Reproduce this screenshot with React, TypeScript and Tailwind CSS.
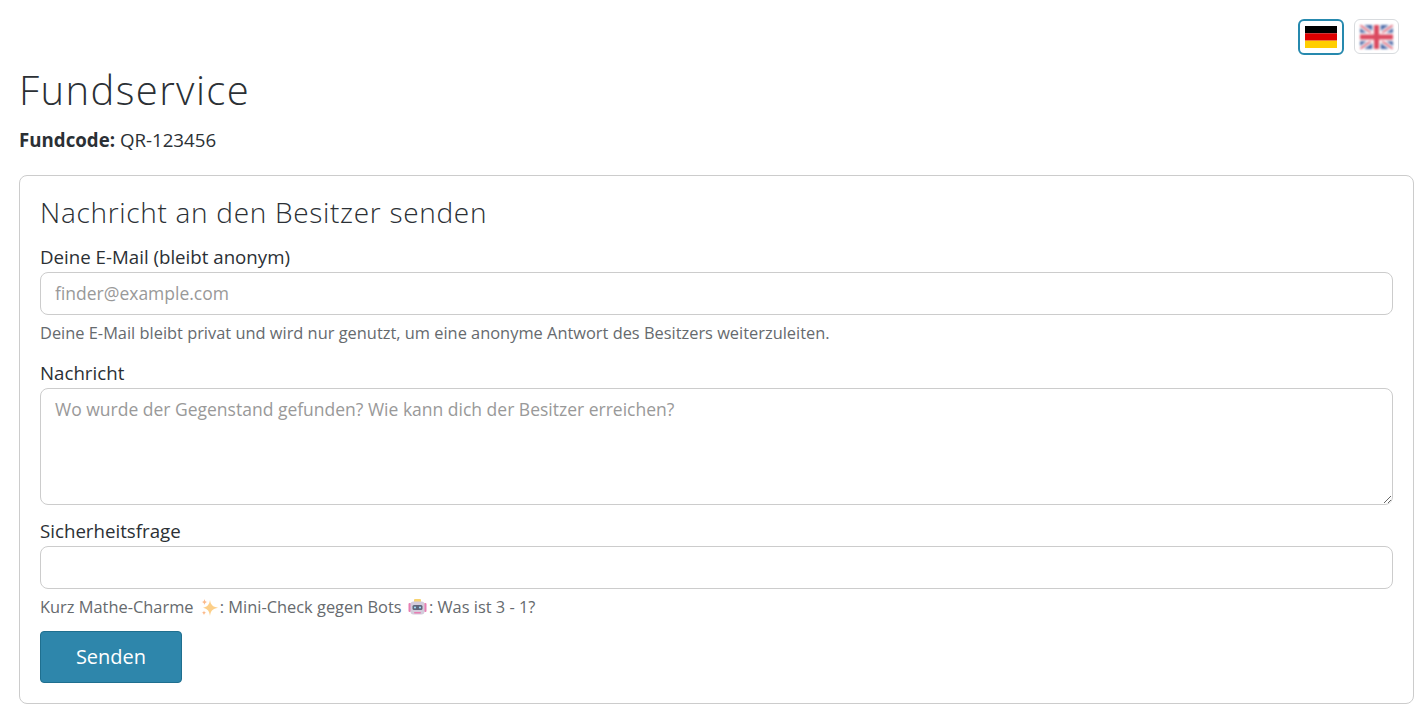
import React from "react";

const body = "font-['Open_Sans',sans-serif]";

function FlagDE() {
  return (
    <svg width="32" height="22" viewBox="0 0 32 22" className="block">
      <rect width="32" height="7.33" y="0" fill="#000000" />
      <rect width="32" height="7.33" y="7.33" fill="#dd0000" />
      <rect width="32" height="7.34" y="14.66" fill="#ffce00" />
    </svg>
  );
}

function FlagUK() {
  return (
    <svg width="33" height="24" viewBox="0 0 33 24" className="block opacity-85 blur-[0.9px]">
      <rect width="33" height="24" fill="#2f5199" />
      <path d="M0 0L33 24M33 0L0 24" stroke="#ffffff" strokeWidth="5" />
      <path d="M0 0L33 24M33 0L0 24" stroke="#d8455b" strokeWidth="1.8" />
      <path d="M16.5 0V24M0 12H33" stroke="#ffffff" strokeWidth="8.5" />
      <path d="M16.5 0V24M0 12H33" stroke="#d52b45" strokeWidth="5" />
    </svg>
  );
}

function Sparkles() {
  return (
    <svg width="19" height="19" viewBox="0 0 19 19" className="ml-[2px] mr-[1px] inline-block align-[-4px] opacity-60">
      <path d="M10 2C10.8 7 12.5 8.7 18 9.8C12.5 10.9 10.8 12.6 10 18C9.2 12.6 7.5 10.9 3 9.8C7.5 8.7 9.2 7 10 2Z" fill="#fbb03b" />
      <path d="M4.5 1C4.9 3 5.5 3.7 7.5 4C5.5 4.4 4.9 5 4.5 7C4.1 5 3.5 4.4 1.5 4C3.5 3.7 4.1 3 4.5 1Z" fill="#f98a3c" />
      <path d="M4 12.5C4.3 14 4.8 14.5 6.3 14.8C4.8 15.1 4.3 15.6 4 17.2C3.7 15.6 3.2 15.1 1.7 14.8C3.2 14.5 3.7 14 4 12.5Z" fill="#f98a3c" />
    </svg>
  );
}

function Robot() {
  return (
    <svg width="19" height="19" viewBox="0 0 19 19" className="ml-[2px] mr-[2px] inline-block align-[-4px] opacity-75">
      <rect x="6" y="1" width="7" height="3.5" rx="1" fill="#f5c542" />
      <rect x="0.5" y="5" width="2.5" height="9" rx="1" fill="#e0559a" />
      <rect x="16" y="5" width="2.5" height="9" rx="1" fill="#e0559a" />
      <rect x="2.5" y="3.5" width="14" height="13" rx="3" fill="#c5bccf" />
      <rect x="4.5" y="7" width="10" height="5" rx="1.5" fill="#2a3350" />
      <circle cx="7" cy="9.5" r="1.1" fill="#7fd4f5" />
      <circle cx="12" cy="9.5" r="1.1" fill="#7fd4f5" />
      <rect x="6" y="14" width="7" height="1.4" rx="0.7" fill="#e0559a" />
    </svg>
  );
}

export default function App() {
  return (
    <div className={`${body} min-h-[714px] overflow-hidden bg-white pl-[19px] pr-[8px] text-[#2b3035]`}>
      <div className="flex justify-end gap-[10px] pr-[15px] pt-[19px]">
        <button className="flex h-[36px] w-[46px] items-center justify-center rounded-[6px] border-2 border-[#2689ae] bg-white">
          <FlagDE />
        </button>
        <button className="flex h-[35px] w-[45px] items-center justify-center rounded-[6px] border border-[#d8dbde] bg-white">
          <FlagUK />
        </button>
      </div>

      <h1 className="mt-[7px] h-[56px] text-[40px] leading-[56px] font-light tracking-[1.4px] text-[#2b3035]">Fundservice</h1>
      <p className="mt-[10px] h-[24px] text-[18.7px] leading-[24px]">
        <strong className="font-bold">Fundcode:</strong> QR-123456
      </p>

      <form className="mt-[23px] h-[529px] rounded-[8px] border border-[#cccccc] px-[20px] pt-[16px]">
        <h2 className="h-[40px] text-[28px] leading-[40px] font-[350] tracking-[0.7px] text-[#2b3035]">
          Nachricht an den Besitzer senden
        </h2>

        <label className="mt-[13px] block h-[24px] text-[18.7px] leading-[24px]">Deine E-Mail (bleibt anonym)</label>
        <input
          type="email"
          placeholder="finder@example.com"
          className="mt-[3px] block h-[43px] w-full rounded-[8px] border border-[#cccccc] bg-white px-[14px] pb-[1px] text-[17.5px] outline-none placeholder:text-[#999999]"
        />
        <p className="mt-[6px] h-[24px] text-[16.4px] leading-[24px] text-[#666a6e]">
          Deine E-Mail bleibt privat und wird nur genutzt, um eine anonyme Antwort des Besitzers weiterzuleiten.
        </p>

        <label className="mt-[16px] block h-[24px] text-[18.7px] leading-[24px]">Nachricht</label>
        <textarea
          placeholder="Wo wurde der Gegenstand gefunden? Wie kann dich der Besitzer erreichen?"
          className="mt-[3px] block h-[117px] w-full rounded-[8px] border border-[#cccccc] bg-white px-[14px] py-[7px] text-[17.5px] leading-[26px] outline-none placeholder:text-[#999999]"
        />

        <label className="mt-[14px] block h-[24px] text-[18.7px] leading-[24px]">Sicherheitsfrage</label>
        <input
          type="text"
          className="mt-[3px] block h-[43px] w-full rounded-[8px] border border-[#cccccc] bg-white px-[14px] text-[17.5px] outline-none"
        />
        <p className="mt-[6px] h-[24px] whitespace-nowrap text-[16.4px] leading-[24px] text-[#666a6e]">
          Kurz Mathe-Charme <Sparkles />: Mini-Check gegen Bots <Robot />: Was ist 3 - 1?
        </p>

        <button
          type="button"
          className="mt-[12px] block h-[52px] w-[142px] rounded-[4px] border border-[#1f6f8f] bg-[#2e86ab] text-[20px] text-white"
        >
          Senden
        </button>
      </form>
    </div>
  );
}
